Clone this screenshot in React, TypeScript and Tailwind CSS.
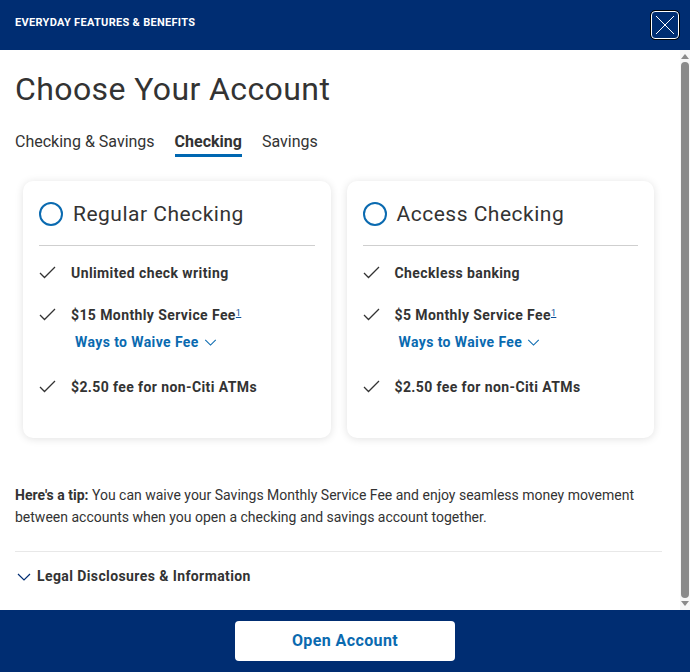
import { useState } from "react";

const navy = "bg-[#002d72]";

type Feature = { text: string; sup?: boolean; waive?: boolean };

type Account = { name: string; features: Feature[] };

const accounts: Account[] = [
  {
    name: "Regular Checking",
    features: [
      { text: "Unlimited check writing" },
      { text: "$15 Monthly Service Fee", sup: true, waive: true },
      { text: "$2.50 fee for non-Citi ATMs" },
    ],
  },
  {
    name: "Access Checking",
    features: [
      { text: "Checkless banking" },
      { text: "$5 Monthly Service Fee", sup: true, waive: true },
      { text: "$2.50 fee for non-Citi ATMs" },
    ],
  },
];

function Check() {
  return (
    <svg width="17" height="13" viewBox="0 0 17 13" fill="none" className="mt-[2px] shrink-0">
      <path d="M1 7l4.5 4.5L16 1" stroke="#333" strokeWidth="1.3" />
    </svg>
  );
}

function Chevron({ className = "", w = 14, h = 8 }: { className?: string; w?: number; h?: number }) {
  return (
    <svg width={w} height={h} viewBox="0 0 14 8" fill="none" className={className}>
      <path d="M1 1l6 6 6-6" stroke="currentColor" strokeWidth="1.2" />
    </svg>
  );
}

function AccountCard({ account }: { account: Account }) {
  return (
    <div className="flex-1 rounded-[10px] bg-white px-4 pb-[42px] pt-[20px] shadow-[0_1px_8px_rgba(0,0,0,0.12)]">
      <div className="flex items-center gap-[10px]">
        <span className="h-[24px] w-[24px] rounded-full border-2 border-[#0a6ab0]" />
        <span className="text-[21px] leading-[26px] tracking-[0.5px] text-[#333]">{account.name}</span>
      </div>
      <div className="mt-[18px] h-px bg-[#cfcfcf]" />
      <ul className="mt-[18px] flex flex-col gap-[24px]">
        {account.features.map((f) => (
          <li key={f.text} className="flex gap-[15px]">
            <Check />
            <div>
              <p className="text-[14px] font-bold leading-[18px] tracking-[0.4px] text-[#333]">
                {f.text}
                {f.sup && (
                  <sup className="text-[9px] font-normal text-[#0a4f9a] underline">1</sup>
                )}
              </p>
              {f.waive && (
                <button className="mb-[1px] mt-[8px] flex items-center gap-[5px] pl-[4px] text-[14px] font-bold tracking-[0.4px] text-[#0a6ab0]">
                  Ways to Waive Fee
                  <Chevron w={13} h={7} />
                </button>
              )}
            </div>
          </li>
        ))}
      </ul>
    </div>
  );
}

export default function App() {
  const [tab, setTab] = useState("Checking");
  const tabs = ["Checking & Savings", "Checking", "Savings"];

  return (
    <div className="flex h-[672px] w-[690px] flex-col overflow-hidden bg-white font-['Roboto',sans-serif]">
      <header className={`${navy} flex h-[50px] shrink-0 items-center justify-between pl-[15px] pr-[11px]`}>
        <h2 className="pb-[4px] text-[11px] font-bold tracking-[0.3px] text-white">EVERYDAY FEATURES &amp; BENEFITS</h2>
        <button className="flex h-[28px] w-[28px] items-center justify-center rounded-[4px] border border-white outline outline-1 outline-black">
          <svg width="20" height="20" viewBox="0 0 20 20">
            <path d="M1 1l18 18M19 1L1 19" stroke="white" strokeWidth="1" />
          </svg>
        </button>
      </header>

      <div className="flex min-h-0 flex-1">
        <main className="flex-1 overflow-hidden pl-[15px] pr-[18px]">
          <h1 className="mt-[20px] text-[32px] leading-[38px] tracking-[0.4px] text-[#333]">Choose Your Account</h1>

          <nav className="mt-[24px] flex gap-[20px]">
            {tabs.map((t) => (
              <button
                key={t}
                onClick={() => setTab(t)}
                className={
                  t === tab
                    ? "border-b-[3px] border-[#0067b1] pb-[2px] text-[16px] font-bold leading-[20px] text-[#333]"
                    : "border-b-[3px] border-transparent pb-[2px] text-[16px] leading-[20px] text-[#333]"
                }
              >
                {t}
              </button>
            ))}
          </nav>

          <div className="mt-[24px] flex gap-[16px] px-[8px]">
            {accounts.map((a) => (
              <AccountCard key={a.name} account={a} />
            ))}
          </div>

          <p className="mt-[46px] text-[14px] leading-[22px] text-[#333]">
            <b>Here's a tip:</b> You can waive your Savings Monthly Service Fee and enjoy seamless money movement
            between accounts when you open a checking and savings account together.
          </p>

          <div className="mt-[23px] h-px bg-[#e8e8e8]" />

          <button className="mt-[14px] flex items-center gap-[6px] pl-[2px] text-[14px] font-bold tracking-[0.4px] text-[#333]">
            <Chevron className="text-[#002d72]" />
            Legal Disclosures &amp; Information
          </button>
        </main>

        <div className="flex w-[10px] shrink-0 flex-col items-center bg-[#f7f7f7] py-[4px]">
          <svg width="8" height="5" viewBox="0 0 8 5">
            <path d="M0 5L4 0l4 5z" fill="#8a8a8a" />
          </svg>
          <div className="my-[3px] w-[8px] flex-1 rounded-full bg-[#8a8a8a]" />
          <svg width="8" height="5" viewBox="0 0 8 5">
            <path d="M0 0l4 5 4-5z" fill="#8a8a8a" />
          </svg>
        </div>
      </div>

      <footer className={`${navy} flex h-[62px] shrink-0 items-center justify-center`}>
        <button className="h-[40px] w-[220px] rounded-[4px] bg-white text-[16px] font-bold tracking-[0.4px] text-[#0a6ab0]">
          Open Account
        </button>
      </footer>
    </div>
  );
}
